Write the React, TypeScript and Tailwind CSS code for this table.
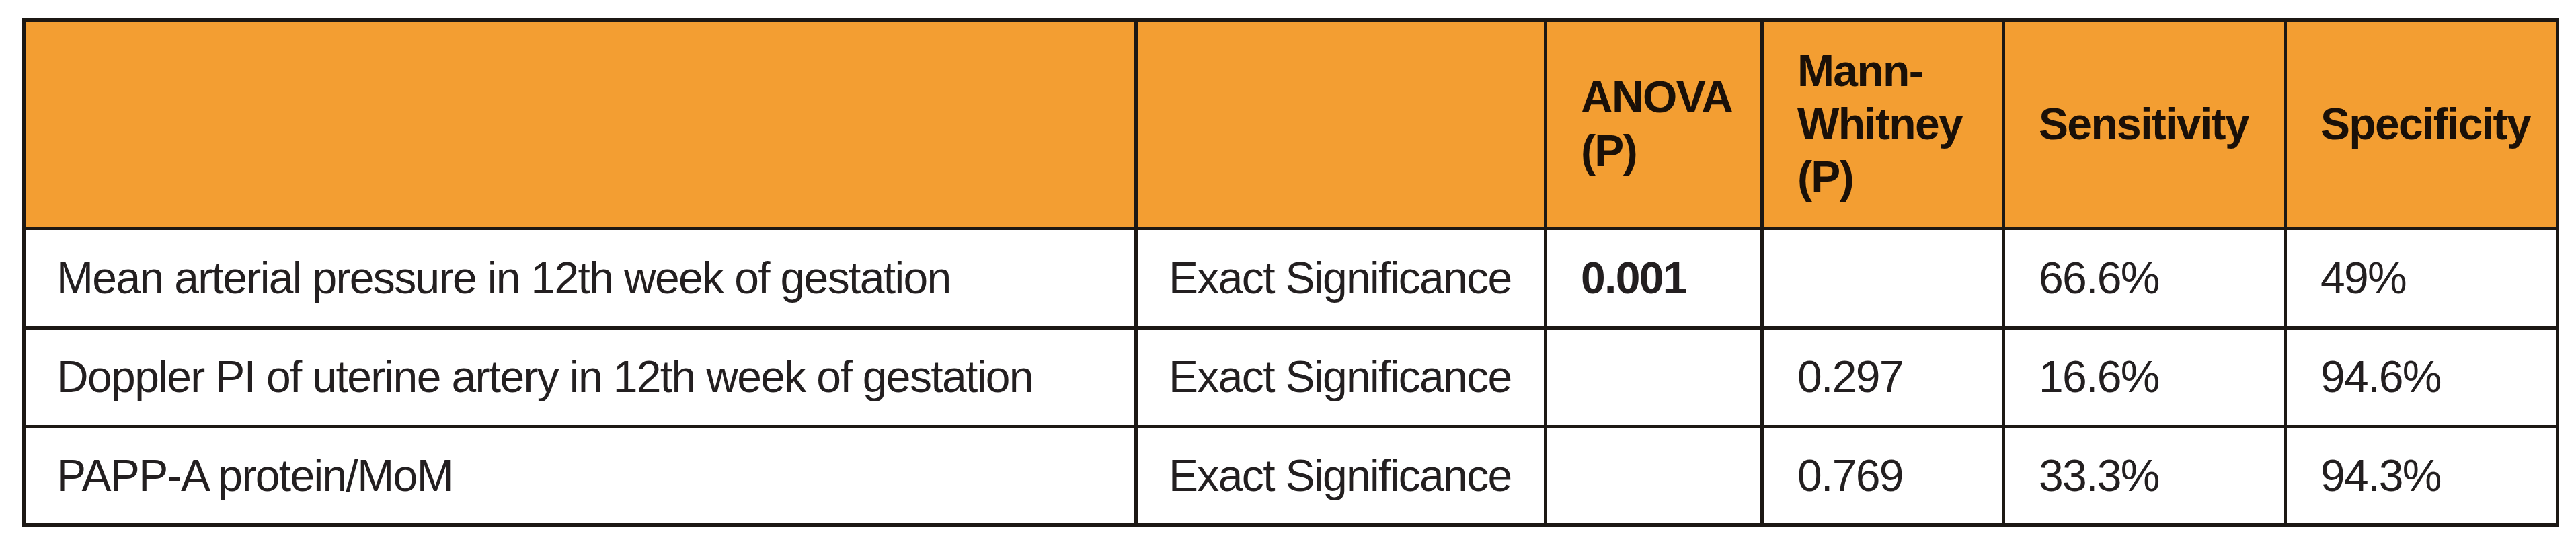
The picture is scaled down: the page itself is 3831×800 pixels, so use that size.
const rows = [
  {
    label: "Mean arterial pressure in 12th week of gestation",
    test: "Exact Significance",
    anova: "0.001",
    mann: "",
    sens: "66.6%",
    spec: "49%",
  },
  {
    label: "Doppler PI of uterine artery in 12th week of gestation",
    test: "Exact Significance",
    anova: "",
    mann: "0.297",
    sens: "16.6%",
    spec: "94.6%",
  },
  {
    label: "PAPP-A protein/MoM",
    test: "Exact Significance",
    anova: "",
    mann: "0.769",
    sens: "33.3%",
    spec: "94.3%",
  },
];

const rowHeights = ["h-[148px]", "h-[147px]", "h-[146px]"];

export default function App() {
  return (
    <div className="bg-white w-[3831px] h-[800px] pt-[27px] pl-[33px] font-['Liberation_Sans',Arial,sans-serif] text-[66px] tracking-[-0.025em] leading-[1.2]">
      <table className="table-fixed border-collapse w-[3773px] border-[5px] border-[#1c1814]">
        <colgroup>
          <col className="w-[1654px]" />
          <col className="w-[609px]" />
          <col className="w-[322px]" />
          <col className="w-[359px]" />
          <col className="w-[419px]" />
          <col className="w-[405px]" />
        </colgroup>
        <thead>
          <tr className="h-[310px] bg-[#f39e32] text-[#1a1008] font-bold">
            <th className="border-[5px] border-[#1c1814]"></th>
            <th className="border-[5px] border-[#1c1814]"></th>
            <th className="border-[5px] border-[#1c1814] text-left align-middle pl-[50px] pr-2">
              ANOVA
              <br />
              (P)
            </th>
            <th className="border-[5px] border-[#1c1814] text-left align-middle pl-[50px] pr-2">
              Mann-
              <br />
              Whitney
              <br />
              (P)
            </th>
            <th className="border-[5px] border-[#1c1814] text-left align-middle pl-[50px] pr-2">Sensitivity</th>
            <th className="border-[5px] border-[#1c1814] text-left align-middle pl-[50px] pr-2">Specificity</th>
          </tr>
        </thead>
        <tbody className="text-[#231f20]">
          {rows.map((row, i) => (
            <tr key={row.label} className={rowHeights[i]}>
              <td className="border-[5px] border-[#1c1814] pl-[46px] whitespace-nowrap">{row.label}</td>
              <td className="border-[5px] border-[#1c1814] pl-[46px] whitespace-nowrap">{row.test}</td>
              <td className="border-[5px] border-[#1c1814] pl-[50px] font-bold">{row.anova}</td>
              <td className="border-[5px] border-[#1c1814] pl-[50px]">{row.mann}</td>
              <td className="border-[5px] border-[#1c1814] pl-[50px]">{row.sens}</td>
              <td className="border-[5px] border-[#1c1814] pl-[50px]">{row.spec}</td>
            </tr>
          ))}
        </tbody>
      </table>
    </div>
  );
}
